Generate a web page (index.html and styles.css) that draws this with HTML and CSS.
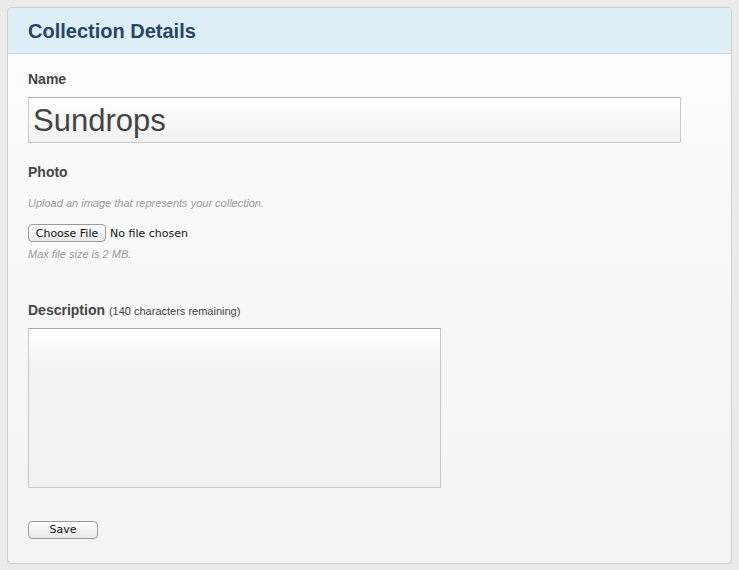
FILE: index.html
```html
<!DOCTYPE html>
<html>
<head>
<meta charset="utf-8">
<link rel="stylesheet" href="styles.css">
</head>
<body>
<div class="panel">
  <div class="panel-header"><h1 class="title">Collection Details</h1></div>
  <form class="panel-body">
    <div class="field field-name">
      <label class="label">Name</label>
      <input class="text-input" type="text" value="Sundrops">
    </div>
    <div class="field field-photo">
      <label class="label">Photo</label>
      <p class="help">Upload an image that represents your collection.</p>
      <div class="file-row"><span class="btn btn-file">Choose File</span><span class="file-status">No file chosen</span></div>
      <p class="help help-small">Max file size is 2 MB.</p>
    </div>
    <div class="field field-desc">
      <label class="label">Description <span class="remaining">(140 characters remaining)</span></label>
      <textarea class="textarea"></textarea>
    </div>
    <div class="actions"><span class="btn btn-save">Save</span></div>
  </form>
</div>
</body>
</html>
```
FILE: styles.css
```css
html, body { margin: 0; padding: 0; }
body {
  background: #ebebeb;
  font-family: "Liberation Sans", Arial, sans-serif;
  width: 739px;
  height: 570px;
  overflow: hidden;
}
.panel {
  margin: 7px 7px 0 7px;
  height: 557px;
  border: 1px solid #cfcfcf;
  border-radius: 4px;
  background: linear-gradient(#fdfdfd, #f3f3f3);
  box-sizing: border-box;
  overflow: hidden;
}
.panel-header {
  height: 46px;
  box-sizing: border-box;
  padding-top: 2px;
  background: #dfeff7;
  border-bottom: 1px solid #c4dbe6;
  display: flex;
  align-items: center;
  padding-left: 20px;
}
.title {
  margin: 0;
  font-size: 20px;
  font-weight: bold;
  color: #254669;
}
.panel-body {
  padding: 0 20px;
  display: flex;
  flex-direction: column;
}
.label {
  display: block;
  font-size: 14px;
  font-weight: bold;
  color: #444;
}
.field-name { padding-top: 17px; }
.field-name .label { margin-bottom: 10px; }
.text-input {
  display: block;
  width: 653px;
  height: 46px;
  box-sizing: border-box;
  border: 1px solid #c8c8c8;
  border-top-color: #a8a8a8;
  background: linear-gradient(#ffffff, #f1f1f1);
  font-family: "Liberation Sans", Arial, sans-serif;
  font-size: 31px;
  color: #444;
  padding: 2px 4px 0 4px;
  margin: 0;
  outline: none;
}
.field-photo { padding-top: 21px; }
.help {
  margin: 17px 0 0 0;
  font-size: 11px;
  font-style: italic;
  color: #999;
}
.file-row {
  margin-top: 15px;
  display: flex;
  align-items: center;
  height: 18px;
}
.btn {
  display: inline-flex;
  align-items: center;
  justify-content: center;
  box-sizing: border-box;
  border: 1px solid #9a9a9a;
  border-radius: 4px;
  background: linear-gradient(#ffffff, #e8e8e8);
  font-family: "DejaVu Sans", sans-serif;
  font-size: 11px;
  color: #111;
}
.btn-file { width: 78px; height: 18px; }
.file-status {
  margin-left: 4px;
  font-family: "DejaVu Sans", sans-serif;
  font-size: 11px;
  color: #111;
}
.help-small { margin-top: 6px; }
.field-desc { padding-top: 42px; }
.field-desc .label { margin-bottom: 10px; }
.remaining { font-weight: normal; font-size: 11px; color: #444; }
.textarea {
  display: block;
  width: 413px;
  height: 160px;
  box-sizing: border-box;
  border: 1px solid #c8c8c8;
  border-top-color: #a8a8a8;
  background: linear-gradient(#ffffff, #f2f2f2 25%, #f2f2f2);
  resize: none;
  margin: 0;
  outline: none;
}
.actions { padding-top: 31px; }
.btn-save { width: 70px; height: 18px; }
```
